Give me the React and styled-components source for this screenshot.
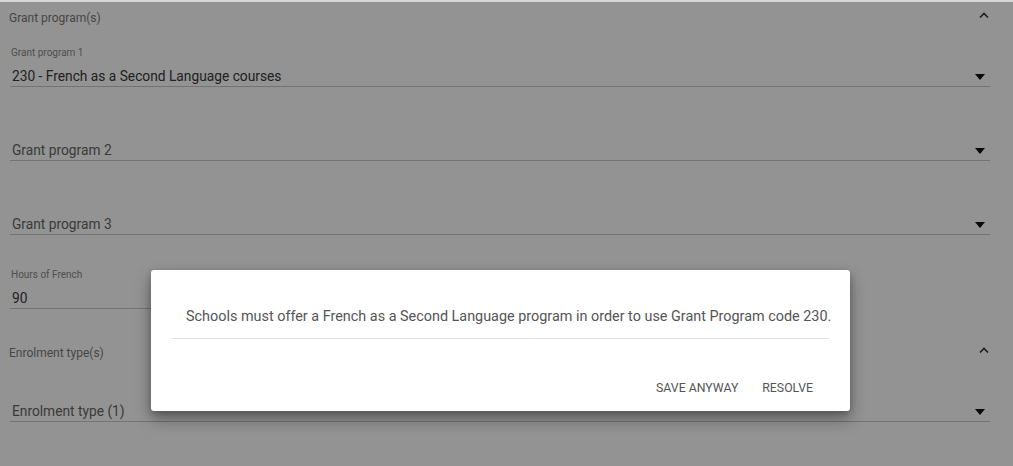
import React from 'react'
import styled, { createGlobalStyle } from 'styled-components'

const GlobalStyle = createGlobalStyle`
  html, body {
    margin: 0;
    padding: 0;
    background: #ffffff;
    font-family: Roboto, "Liberation Sans", Arial, sans-serif;
  }
`

const Page = styled.div`
  position: relative;
  width: 1013px;
  height: 466px;
  overflow: hidden;
  background: #ffffff;
  border-top: 2px solid #d6d6d6;
  box-sizing: border-box;
`

const Section = styled.div`
  padding: 0 23px 0 10px;
  margin-bottom: 28px;
`

const SectionHeader = styled.div`
  display: flex;
  align-items: center;
  justify-content: space-between;
  height: 32px;
  margin-left: -1px;
  margin-right: 0;
  font-size: 12px;
  color: #7a7a7a;
`

const Chevron = styled.svg`
  width: 12px;
  height: 12px;
  margin-top: -6px;
`

const Fields = styled.div`
  display: flex;
  flex-direction: column;
  gap: 33px;
  margin-top: 12px;
`

const Field = styled.div`
  width: ${p => (p.$half ? '480px' : '980px')};
`

const Label = styled.div`
  height: 14px;
  line-height: 14px;
  font-size: 10px;
  color: #8a8a8a;
  padding-left: 1px;
  margin-bottom: 6px;
`

const ValueRow = styled.div`
  display: flex;
  align-items: center;
  justify-content: space-between;
  height: 20px;
  border-bottom: 1px solid #c8c8c8;
  padding: 0 5px 0 2px;
  font-size: 13.75px;
  color: ${p => (p.$placeholder ? '#666666' : '#383838')};
`

const Caret = styled.span`
  width: 0;
  height: 0;
  border-left: 5px solid transparent;
  border-right: 5px solid transparent;
  border-top: 6px solid #111111;
  margin-top: 1px;
`

const Overlay = styled.div`
  position: absolute;
  inset: 0;
  background: rgba(0, 0, 0, 0.425);
  padding: 268px 0 0 151px;
  box-sizing: border-box;
`

const Dialog = styled.div`
  width: 699px;
  height: 141px;
  background: #ffffff;
  border-radius: 3px;
  box-shadow: 0 8px 16px rgba(0, 0, 0, 0.35), 0 2px 6px rgba(0, 0, 0, 0.2);
  padding: 0 21px;
  box-sizing: border-box;
  display: flex;
  flex-direction: column;
`

const Message = styled.div`
  height: 69px;
  padding: 38px 0 0 14px;
  box-sizing: border-box;
  font-size: 14.4px;
  color: #555555;
  line-height: 18px;
  white-space: nowrap;
  border-bottom: 1px solid #e2e2e2;
`

const Actions = styled.div`
  display: flex;
  justify-content: flex-end;
  gap: 24px;
  padding: 42px 16px 0 0;
`

const ActionButton = styled.button`
  border: none;
  background: none;
  padding: 0;
  font-family: inherit;
  font-size: 12.3px;
  color: #555555;
  text-transform: uppercase;
  cursor: pointer;
`

const ChevronUp = () => (
  <Chevron viewBox="0 0 12 12">
    <path d="M2 8.5 L6 4.5 L10 8.5" fill="none" stroke="#333" strokeWidth="1.6" />
  </Chevron>
)

const SelectField = ({ label, value, placeholder, half, select = true }) => (
  <Field $half={half}>
    <Label>{label}</Label>
    <ValueRow $placeholder={placeholder}>
      <span>{value || placeholder}</span>
      {select && <Caret />}
    </ValueRow>
  </Field>
)

const App = () => {
  return (
    <Page>
      <GlobalStyle />
      <Section>
        <SectionHeader>
          <span>Grant program(s)</span>
          <ChevronUp />
        </SectionHeader>
        <Fields>
          <SelectField label="Grant program 1" value="230 - French as a Second Language courses" />
          <SelectField placeholder="Grant program 2" />
          <SelectField placeholder="Grant program 3" />
          <SelectField label="Hours of French" value="90" half select={false} />
        </Fields>
      </Section>
      <Section>
        <SectionHeader>
          <span>Enrolment type(s)</span>
          <ChevronUp />
        </SectionHeader>
        <Fields>
          <SelectField placeholder="Enrolment type (1)" />
        </Fields>
      </Section>
      <Overlay>
        <Dialog>
          <Message>
            Schools must offer a French as a Second Language program in order to use Grant Program code 230.
          </Message>
          <Actions>
            <ActionButton>Save anyway</ActionButton>
            <ActionButton>Resolve</ActionButton>
          </Actions>
        </Dialog>
      </Overlay>
    </Page>
  )
}

export default App
